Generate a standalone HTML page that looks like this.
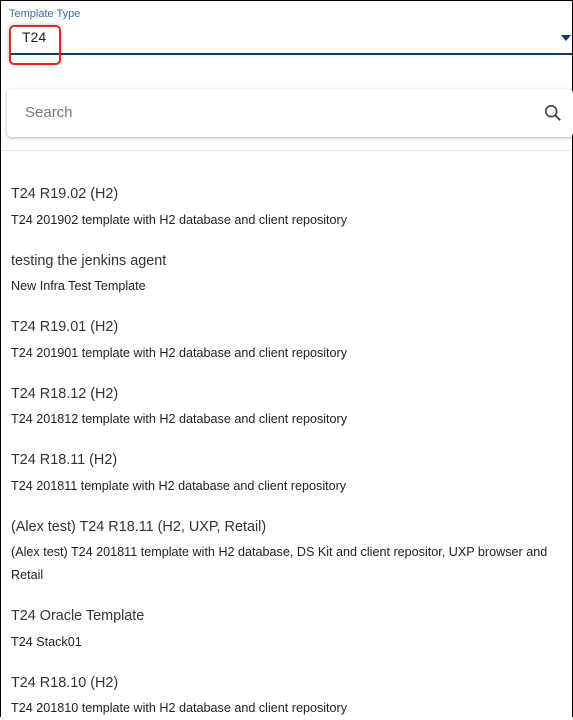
<!DOCTYPE html>
<html><head><style>
*{margin:0;padding:0;box-sizing:border-box}
body{width:573px;height:717px;overflow:hidden;background:#fff;font-family:"Liberation Sans",Arial,sans-serif;position:relative}
.frame{position:absolute;left:0;top:0;width:573px;height:717px;border:1px solid #000;border-bottom:none}
.lbl{position:absolute;left:9px;top:8px;font-size:11px;color:#3d6b9e}
.val{position:absolute;left:22px;top:29px;font-size:14px;color:#222}
.ul{position:absolute;left:9px;top:53px;width:563px;height:2px;background:#0b3d6f}
.arrow{position:absolute;left:561px;top:35px;width:0;height:0;border-left:5px solid transparent;border-right:5px solid transparent;border-top:6px solid #0b3d6f}
.red{position:absolute;left:9px;top:25px;width:52px;height:40px;border:2px solid #e0282a;border-radius:5px;box-shadow:0 0 4px rgba(0,0,0,.3)}
.search{position:absolute;left:7px;top:89px;width:566px;height:48px;border-radius:4px;box-shadow:0 1px 3px rgba(0,0,0,.3);background:#fff}
.search span{position:absolute;left:18px;top:15px;font-size:15px;color:#777}
.sep{position:absolute;left:1px;top:150px;width:571px;height:1px;background:#e4e4e4}
.t{position:absolute;left:11px;font-size:14.4px;color:#333}
.d{position:absolute;left:11px;font-size:12.6px;color:#222;line-height:23px;width:545px}
</style></head><body>
<div class="frame"></div>
<div class="lbl">Template Type</div>
<div class="val">T24</div>
<div class="ul"></div>
<div class="arrow"></div>
<div class="red"></div>
<div class="search"><span>Search</span>
<svg style="position:absolute;left:537px;top:15px" width="18" height="18" viewBox="0 0 20 20"><circle cx="8" cy="8" r="6" fill="none" stroke="#444" stroke-width="1.8"/><line x1="12.5" y1="12.5" x2="18" y2="18" stroke="#444" stroke-width="2.2"/></svg></div>
<div class="sep"></div>
<div class="t" style="top:186px">T24 R19.02 (H2)</div>
<div class="d" style="top:209px">T24 201902 template with H2 database and client repository</div>
<div class="t" style="top:253px">testing the jenkins agent</div>
<div class="d" style="top:275px">New Infra Test Template</div>
<div class="t" style="top:319px">T24 R19.01 (H2)</div>
<div class="d" style="top:342px">T24 201901 template with H2 database and client repository</div>
<div class="t" style="top:386px">T24 R18.12 (H2)</div>
<div class="d" style="top:408px">T24 201812 template with H2 database and client repository</div>
<div class="t" style="top:452px">T24 R18.11 (H2)</div>
<div class="d" style="top:475px">T24 201811 template with H2 database and client repository</div>
<div class="t" style="top:519px">(Alex test) T24 R18.11 (H2, UXP, Retail)</div>
<div class="d" style="top:541px">(Alex test) T24 201811 template with H2 database, DS Kit and client repositor, UXP browser and Retail</div>
<div class="t" style="top:608px">T24 Oracle Template</div>
<div class="d" style="top:631px">T24 Stack01</div>
<div class="t" style="top:675px">T24 R18.10 (H2)</div>
<div class="d" style="top:697px">T24 201810 template with H2 database and client repository</div>
</body></html>
